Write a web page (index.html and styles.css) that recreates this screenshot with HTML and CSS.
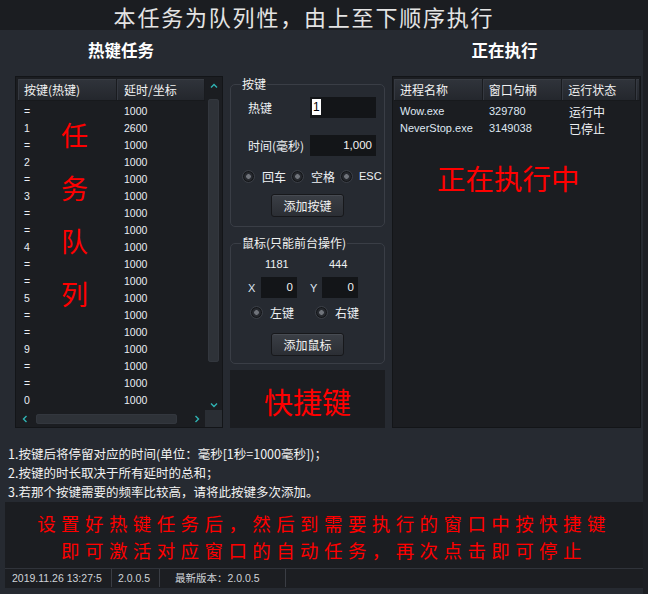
FILE: index.html
```html
<!DOCTYPE html>
<html lang="zh-CN">
<head>
<meta charset="utf-8">
<title>热键任务</title>
<link rel="stylesheet" href="styles.css">
</head>
<body>
<div class="titlebar">本任务为队列性，由上至下顺序执行</div>
<div class="main">
  <div class="heads">
    <div class="h1">热键任务</div>
    <div class="h2">正在执行</div>
  </div>
  <div class="content">
    <div class="listbox lb-left">
      <div class="lv">
        <div class="lv-head"><div class="hc k1">按键(热键)</div><div class="hc k2">延时/坐标</div></div>
        <div class="lv-body">
          <div class="row"><span class="k1">=</span><span class="k2">1000</span></div>
          <div class="row"><span class="k1">1</span><span class="k2">2600</span></div>
          <div class="row"><span class="k1">=</span><span class="k2">1000</span></div>
          <div class="row"><span class="k1">2</span><span class="k2">1000</span></div>
          <div class="row"><span class="k1">=</span><span class="k2">1000</span></div>
          <div class="row"><span class="k1">3</span><span class="k2">1000</span></div>
          <div class="row"><span class="k1">=</span><span class="k2">1000</span></div>
          <div class="row"><span class="k1">=</span><span class="k2">1000</span></div>
          <div class="row"><span class="k1">4</span><span class="k2">1000</span></div>
          <div class="row"><span class="k1">=</span><span class="k2">1000</span></div>
          <div class="row"><span class="k1">=</span><span class="k2">1000</span></div>
          <div class="row"><span class="k1">5</span><span class="k2">1000</span></div>
          <div class="row"><span class="k1">=</span><span class="k2">1000</span></div>
          <div class="row"><span class="k1">=</span><span class="k2">1000</span></div>
          <div class="row"><span class="k1">9</span><span class="k2">1000</span></div>
          <div class="row"><span class="k1">=</span><span class="k2">1000</span></div>
          <div class="row"><span class="k1">=</span><span class="k2">1000</span></div>
          <div class="row"><span class="k1">0</span><span class="k2">1000</span></div>
        </div>
      </div>
      <div class="vscroll">
        <svg class="arr" width="8" height="6" viewBox="0 0 8 6"><polyline points="1,4.5 4,1.5 7,4.5" fill="none" stroke="#2fb3b3" stroke-width="1.4"/></svg>
        <div class="vthumb"></div>
        <svg class="arr" width="8" height="6" viewBox="0 0 8 6"><polyline points="1,1.5 4,4.5 7,1.5" fill="none" stroke="#2fb3b3" stroke-width="1.4"/></svg>
      </div>
      <div class="hscroll">
        <svg class="arr" width="6" height="8" viewBox="0 0 6 8"><polyline points="4.5,1 1.5,4 4.5,7" fill="none" stroke="#2fb3b3" stroke-width="1.4"/></svg>
        <div class="hthumb"></div>
        <svg class="arr" width="6" height="8" viewBox="0 0 6 8"><polyline points="1.5,1 4.5,4 1.5,7" fill="none" stroke="#2fb3b3" stroke-width="1.4"/></svg>
      </div>
      <div class="corner"></div>
      <div class="overlay ov-left">任<br>务<br>队<br>列</div>
    </div>

    <div class="mid">
      <fieldset class="group g-key">
        <legend>按键</legend>
        <div class="frow r1"><span class="lbl">热键</span><span class="inp"><span class="sel">1</span></span></div>
        <div class="frow r2"><span class="lbl">时间(毫秒)</span><span class="inp num">1,000</span></div>
        <div class="radios rk">
          <span class="radio"><i></i>回车</span>
          <span class="radio"><i></i>空格</span>
          <span class="radio esc"><i></i>ESC</span>
        </div>
        <div class="btnrow"><span class="btn">添加按键</span></div>
      </fieldset>
      <fieldset class="group g-mouse">
        <legend>鼠标(只能前台操作)</legend>
        <div class="coords"><span class="cx">1181</span><span class="cy">444</span></div>
        <div class="frow xy"><span class="axis">X</span><span class="inp sm num">0</span><span class="axis ay">Y</span><span class="inp sm num">0</span></div>
        <div class="radios rm">
          <span class="radio"><i></i>左键</span>
          <span class="radio r2nd"><i></i>右键</span>
        </div>
        <div class="btnrow bm"><span class="btn">添加鼠标</span></div>
      </fieldset>
      <div class="hotkey">快捷键</div>
    </div>

    <div class="listbox lb-right">
      <div class="lv-head">
        <div class="hc p1">进程名称</div><div class="hc p2">窗口句柄</div><div class="hc p3">运行状态</div><div class="hc p4"></div>
      </div>
      <div class="lv-body">
        <div class="row"><span class="p1 lat">Wow.exe</span><span class="p2 lat">329780</span><span class="p3">运行中</span></div>
        <div class="row"><span class="p1 lat">NeverStop.exe</span><span class="p2 lat">3149038</span><span class="p3">已停止</span></div>
      </div>
      <div class="overlay ov-right">正在执行中</div>
    </div>
  </div>

  <div class="notes">
    <div>1.按键后将停留对应的时间(单位：毫秒[1秒=1000毫秒])；</div>
    <div>2.按键的时长取决于所有延时的总和；</div>
    <div>3.若那个按键需要的频率比较高，请将此按键多次添加。</div>
  </div>

  <div class="banner">
    <div>设置好热键任务后，然后到需要执行的窗口中按快捷键</div>
    <div>即可激活对应窗口的自动任务，再次点击即可停止</div>
  </div>

  <div class="status">
    <span class="seg s1">2019.11.26 13:27:5</span>
    <span class="seg s2">2.0.0.5</span>
    <span class="seg s3">最新版本：2.0.0.5</span>
  </div>
</div>
</body>
</html>
```

FILE: styles.css
```css
* { box-sizing: border-box; }
html, body { margin: 0; padding: 0; }
body {
  width: 648px;
  height: 594px;
  overflow: hidden;
  background: #262a31;
  color: #eef1f4;
  font-family: "Liberation Sans", "Noto Sans CJK SC", sans-serif;
  font-size: 12px;
}

.titlebar {
  height: 30px;
  background: #1b1d21;
  color: #e4e4e4;
  font-family: "Noto Sans CJK SC", sans-serif;
  font-size: 22px;
  letter-spacing: 1.8px;
  line-height: 32px;
  text-align: center;
  padding-right: 40px;
  white-space: nowrap;
}

.main {
  height: 564px;
  background: #262a31;
  border-right: 5px solid #1d1f24;
  display: flex;
  flex-direction: column;
}

.heads {
  height: 46px;
  display: flex;
  font-family: "Noto Sans CJK SC", sans-serif;
  font-weight: 700;
  font-size: 16.5px;
  line-height: 40px;
  color: #ffffff;
}
.h1 { width: 242px; text-align: center; }
.h2 { width: 241px; margin-left: 142px; text-align: center; }

.content {
  height: 352px;
  display: flex;
  gap: 7px;
  padding-left: 15px;
}

/* list views */
.listbox {
  position: relative;
  background: #1b1d21;
  border: 1px solid #131518;
}
.lb-left {
  width: 208px;
  padding: 2px 0 0 2px;
  display: grid;
  grid-template-columns: 187px 17px;
  grid-template-rows: 331px 17px;
}
.lb-right {
  width: 249px;
  padding: 2px 0 0 1px;
}

.lv { overflow: hidden; }
.lv-head {
  display: flex;
  height: 22px;
}
.hc {
  height: 22px;
  line-height: 21px;
  padding-left: 6px;
  font-family: "Noto Sans CJK SC", sans-serif;
  font-size: 12px;
  color: #f2f2f2;
  background: linear-gradient(#30343b, #24272d);
  border-bottom: 1px solid #17191c;
  border-right: 1px solid #191b1f;
  box-shadow: inset 1px 0 0 #353941, inset 0 1px 0 #383c43;
  white-space: nowrap;
}
.lb-left .hc.k1 { width: 99px; }
.lb-left .hc.k2 { width: 88px; padding-left: 7px; }

.lv-body { padding-top: 2px; }
.row {
  display: flex;
  height: 17px;
  line-height: 17px;
  white-space: nowrap;
}
.lb-left .row { font-size: 10.5px; color: #e9eef4; }
.lb-left .row .k1 { width: 99px; padding-left: 6px; }
.lb-left .row .k2 { width: 88px; padding-left: 7px; }

.lb-right .hc.p1 { width: 89px; }
.lb-right .hc.p2 { width: 80px; }
.lb-right .hc.p3 { width: 74px; }
.lb-right .hc.p4 { width: 4px; padding: 0; }
.lb-right .row { font-size: 12px; }
.lb-right .row .p1 { width: 89px; padding-left: 6px; }
.lb-right .row .p2 { width: 80px; padding-left: 6px; }
.lb-right .row .p3 { width: 74px; padding-left: 6px; font-family: "Noto Sans CJK SC", sans-serif; }
.lb-right .row .lat { font-size: 11px; color: #dfe7f1; }

/* scrollbars */
.vscroll {
  display: flex;
  flex-direction: column;
  align-items: center;
  justify-content: space-between;
  padding: 4px 0 2px 0;
}
.vthumb {
  width: 11px;
  height: 263px;
  margin-top: -8px;
  margin-bottom: 22px;
  border-radius: 3px;
  background: #2e3238;
  box-shadow: inset 0 0 0 1px #33373e;
}
.hscroll {
  display: flex;
  align-items: center;
  padding: 0 5px 0 4px;
}
.hthumb {
  width: 141px;
  height: 10px;
  margin: 0 17px 0 8px;
  border-radius: 3px;
  background: #2e3238;
  box-shadow: inset 0 0 0 1px #33373e;
}
.corner { background: #2a2e34; }
.arr { display: block; }

/* red overlays */
.overlay {
  position: absolute;
  color: #ff0000;
  font-family: "Noto Sans CJK SC", sans-serif;
  pointer-events: none;
}
.ov-left {
  left: 45px;
  top: 31px;
  font-size: 27px;
  line-height: 53px;
}
.ov-right {
  left: 44px;
  top: 86px;
  font-size: 28.5px;
  line-height: 30px;
  white-space: nowrap;
}

/* middle column */
.mid {
  width: 155px;
  display: flex;
  flex-direction: column;
}
.group {
  margin: 0;
  padding: 0 8px 9px 17px;
  border: 1px solid #3a3e46;
  border-radius: 5px;
  min-width: 0;
}
.group legend {
  padding: 0 1px;
  margin-left: -7px;
  font-family: "Noto Sans CJK SC", sans-serif;
  font-size: 12px;
  line-height: 16px;
  color: #f2f2f2;
}
.g-mouse { margin-top: 8px; padding-bottom: 7px; }

.frow {
  display: flex;
  align-items: center;
  height: 21px;
}
.r1 { margin-top: 5px; }
.r2 { margin-top: 17px; }
.lbl {
  width: 62px;
  font-family: "Noto Sans CJK SC", sans-serif;
  font-size: 12px;
  white-space: nowrap;
}
.inp {
  width: 66px;
  height: 21px;
  background: #131518;
  color: #f2f2f2;
  font-size: 12px;
  line-height: 21px;
  padding: 0 4px 0 2px;
  white-space: nowrap;
}
.inp.num { text-align: right; font-size: 11.5px; }
.sel {
  display: inline-block;
  background: #ffffff;
  color: #000000;
  line-height: 16px;
  padding: 0 1px;
  vertical-align: middle;
  margin-top: -2px;
}
.inp.sm { width: 36px; }

.radios {
  display: flex;
  align-items: center;
  height: 14px;
  font-family: "Noto Sans CJK SC", sans-serif;
  font-size: 12px;
}
.rk { margin-top: 13px; margin-left: -6px; gap: 5px; }
.radio {
  display: inline-flex;
  align-items: center;
  gap: 7px;
  white-space: nowrap;
}
.radio i {
  display: block;
  width: 13px;
  height: 13px;
  border-radius: 50%;
  border: 1px solid #3b3f47;
  background: radial-gradient(circle, #70747b 0 2px, #2a2d33 2.6px, #1a1c20 100%);
  box-shadow: inset 0 0 0 1px #15171a;
}
.radio.esc { gap: 6px; font-family: "Liberation Sans", sans-serif; font-size: 11px; }

.btnrow {
  margin-top: 11px;
  margin-left: -9px;
  display: flex;
  justify-content: center;
}
.btn {
  width: 73px;
  height: 23px;
  line-height: 21px;
  text-align: center;
  font-family: "Noto Sans CJK SC", sans-serif;
  font-size: 12px;
  color: #f2f2f2;
  background: linear-gradient(#3b3f46, #2b2e34);
  border: 1px solid #17181b;
  border-radius: 3px;
  box-shadow: inset 0 1px 0 #474b52;
}
.bm { margin-top: 14px; }

.coords {
  margin-top: 6px;
  height: 14px;
  line-height: 14px;
  display: flex;
  padding-left: 17px;
  font-size: 11px;
}
.cx { width: 64px; }
.xy { margin-top: 6px; }
.axis { width: 13px; font-size: 11px; color: #dfe7f1; }
.ay { margin-left: 13px; width: 12px; }
.rm { margin-top: 7px; margin-left: 2px; }
.rm .radio { gap: 7px; }
.rm .r2nd { margin-left: 21px; }

.hotkey {
  margin-top: 6px;
  height: 58px;
  background: #1b1d21;
  color: #ff0000;
  font-family: "Noto Sans CJK SC", sans-serif;
  font-size: 29px;
  line-height: 58px;
  padding-top: 2px;
  text-align: center;
}

/* notes */
.notes {
  margin-top: 16px;
  height: 58px;
  padding-left: 8px;
  font-family: "Noto Sans CJK SC", sans-serif;
  font-size: 12.5px;
  line-height: 19px;
  color: #f2f2f2;
  white-space: nowrap;
}

.banner {
  margin-left: 5px;
  height: 66px;
  padding-top: 8px;
  background: #1b1d21;
  color: #ff0000;
  font-family: "Noto Sans CJK SC", sans-serif;
  font-size: 18.5px;
  letter-spacing: 5.4px;
  line-height: 27px;
  text-align: center;
  white-space: nowrap;
}

.status {
  margin-left: 5px;
  height: 20px;
  background: #1c1e22;
  border-top: 1px solid #30333a;
  display: flex;
  font-size: 10.5px;
  line-height: 19px;
  color: #cfd3d8;
  white-space: nowrap;
}
.seg { border-right: 1px solid #3a3d44; height: 18px; margin-top: 0; }
.s1 { width: 107px; padding-left: 7px; }
.s2 { width: 48px; padding-left: 6px; }
.s3 { width: 126px; padding-left: 15px; font-family: "Liberation Sans", "Noto Sans CJK SC", sans-serif; }
```
